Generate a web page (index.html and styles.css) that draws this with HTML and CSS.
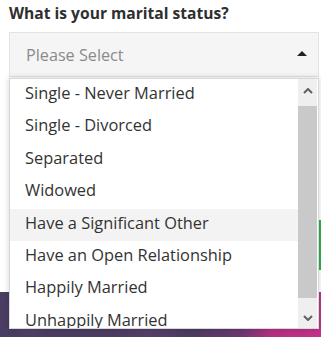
FILE: index.html
```html
<!doctype html>
<html>
<head>
<meta charset="utf-8">
<title>marital status</title>
<link rel="stylesheet" href="styles.css">
</head>
<body>
	<div class="field">
		<label class="q">What is your marital status?</label>
		<div class="pick">
			<div class="select">Please Select<span class="caret"></span></div>
			<div class="menu">
				<ul class="opts">
					<li>Single - Never Married</li>
					<li>Single - Divorced</li>
					<li>Separated</li>
					<li>Widowed</li>
					<li class="hover">Have a Significant Other</li>
					<li>Have an Open Relationship</li>
					<li>Happily Married</li>
					<li>Unhappily Married</li>
				</ul>
				<div class="bar">
					<div class="btn up"><svg width="10" height="6" viewBox="0 0 10 6"><path d="M1 5L5 1L9 5" fill="none" stroke="#606060" stroke-width="2"/></svg></div>
					<div class="thumb"></div>
					<div class="btn down"><svg width="10" height="6" viewBox="0 0 10 6"><path d="M1 1L5 5L9 1" fill="none" stroke="#606060" stroke-width="2"/></svg></div>
				</div>
			</div>
		</div>
	</div>
	<div class="behind">
		<div class="go"></div>
	</div>
	<div class="hero"></div>
</body>
</html>
```
FILE: styles.css
```css
*{margin:0;padding:0;list-style:none;box-sizing:border-box;}
body{
	width:321px;
	height:337px;
	overflow:hidden;
	background:#fff;
	font-family:"Open Sans","Liberation Sans",sans-serif;
	color:#333;
}
.field{
	padding:3px 0 0 9px;
}
.q{
	display:block;
	font-size:15.6px;
	font-weight:bold;
	line-height:21px;
	color:#2f2f2f;
	margin-bottom:8px;
}
.pick{
	position:relative;
	width:310px;
}
.select{
	display:flex;
	align-items:center;
	justify-content:space-between;
	height:45px;
	padding:0 11px 0 16px;
	background:#f5f5f5;
	border:1px solid #e2e2e2;
	font-size:16.2px;
	line-height:42px;
	color:#8a8a8a;
}
.caret{
	width:0;
	height:0;
	border-left:5px solid transparent;
	border-right:5px solid transparent;
	border-bottom:5px solid #222;
	margin-bottom:2px;
}
.menu{
	position:absolute;
	left:0;
	top:calc(100% + 1px);
	width:310px;
	height:251px;
	display:flex;
	background:#fff;
	border:1px solid #d8d8d8;
	box-shadow:0 0 6px rgba(0,0,0,.18);
	z-index:5;
}
.opts{
	flex:1;
	overflow:hidden;
}
.opts li{
	padding:2px 15px 6px;
	font-size:16.4px;
	line-height:24.4px;
	color:#333;
	white-space:nowrap;
}
.opts li.hover{background:#f3f3f3;}
.bar{
	width:19px;
	margin-right:1px;
	display:flex;
	flex-direction:column;
	background:#efefef;
}
.btn{
	display:flex;
	align-items:center;
	justify-content:center;
}
.btn.up{height:27px;padding-bottom:4px;}
.btn.down{margin-top:auto;height:22px;padding-top:2px;}
.btn svg{display:block;}
.thumb{
	height:192px;
	background:#c9c9c9;
}
.behind{
	height:215px;
	display:flex;
	justify-content:flex-end;
	padding-top:143px;
}
.go{
	width:2px;
	height:50px;
	background:#2db24a;
}
.hero{
	height:45px;
	background:
		radial-gradient(circle at 30px 20px,rgba(120,100,150,.5),transparent 25px),
		radial-gradient(circle at 150px 35px,rgba(90,70,110,.6),transparent 40px),
		linear-gradient(90deg,#4a3d62 0%,#4b3a60 60%,#6a3670 75%,#b52e82 85%,#c0338a 100%);
}
```
